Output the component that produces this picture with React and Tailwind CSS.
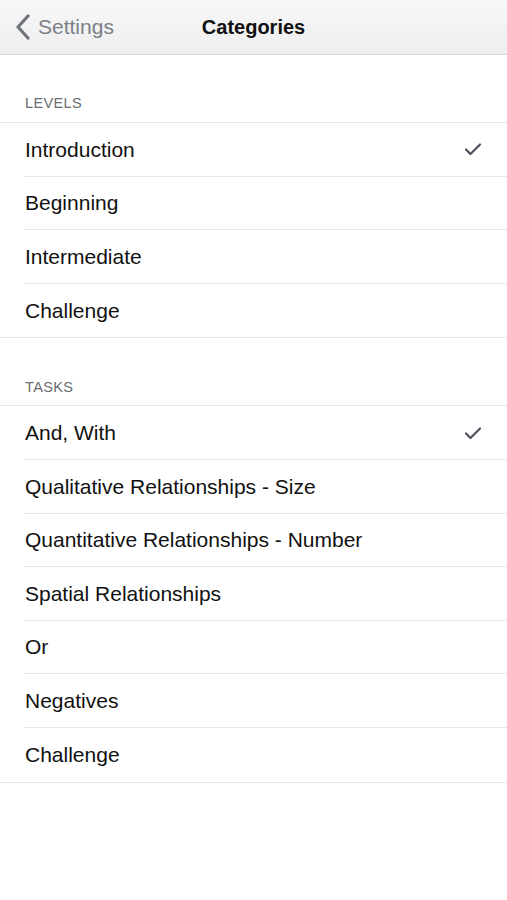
import { useState } from "react";

const levels = ["Introduction", "Beginning", "Intermediate", "Challenge"];
const tasks = [
  "And, With",
  "Qualitative Relationships - Size",
  "Quantitative Relationships - Number",
  "Spatial Relationships",
  "Or",
  "Negatives",
  "Challenge",
];

const Check = () => (
  <svg width="18" height="14" viewBox="0 0 18 14" fill="none">
    <path
      d="M2 7.5 L6.5 12 L16 2.5"
      stroke="#4b505c"
      strokeWidth="2.2"
      strokeLinecap="round"
      strokeLinejoin="round"
    />
  </svg>
);

const Section = ({ title, items, selected, onSelect }) => (
  <div>
    <div className="h-[67px] flex items-end pl-[25px] pb-[7px] text-[14.5px] text-[#6d6d72] tracking-wide">
      {title}
    </div>
    <div className="bg-white border-t border-b border-[#e6e6e8]">
      {items.map((item, i) => (
        <div
          key={item + i}
          onClick={() => onSelect(i)}
          className="pl-[25px] cursor-pointer"
        >
          <div
            className={
              "h-[53.6px] flex items-center justify-between pr-[25px] text-[21px] text-[#111] " +
              (i < items.length - 1 ? "border-b border-[#e6e6e8]" : "")
            }
          >
            <span>{item}</span>
            {selected === i && <Check />}
          </div>
        </div>
      ))}
    </div>
  </div>
);

export default function App() {
  const [level, setLevel] = useState(0);
  const [task, setTask] = useState(0);

  return (
    <div
      className="min-h-screen bg-white"
      style={{ fontFamily: '"Liberation Sans", Arial, sans-serif' }}
    >
      {/* Nav bar */}
      <div className="h-[55px] bg-gradient-to-b from-[#f7f7f7] to-[#eeeeef] border-b border-[#d8d8da] flex items-center relative">
        <div className="flex items-center gap-[7px] pl-[15px] text-[21px] text-[#7b7f87]">
          <svg width="16" height="26" viewBox="0 0 16 26" fill="none">
            <path
              d="M13 2 L3 13 L13 24"
              stroke="#6f737b"
              strokeWidth="3.2"
              strokeLinecap="round"
              strokeLinejoin="round"
            />
          </svg>
          <span>Settings</span>
        </div>
        <div className="absolute inset-x-0 text-center text-[20px] font-bold text-[#111] pointer-events-none">
          Categories
        </div>
      </div>

      <Section title="LEVELS" items={levels} selected={level} onSelect={setLevel} />
      <Section title="TASKS" items={tasks} selected={task} onSelect={setTask} />
    </div>
  );
}
